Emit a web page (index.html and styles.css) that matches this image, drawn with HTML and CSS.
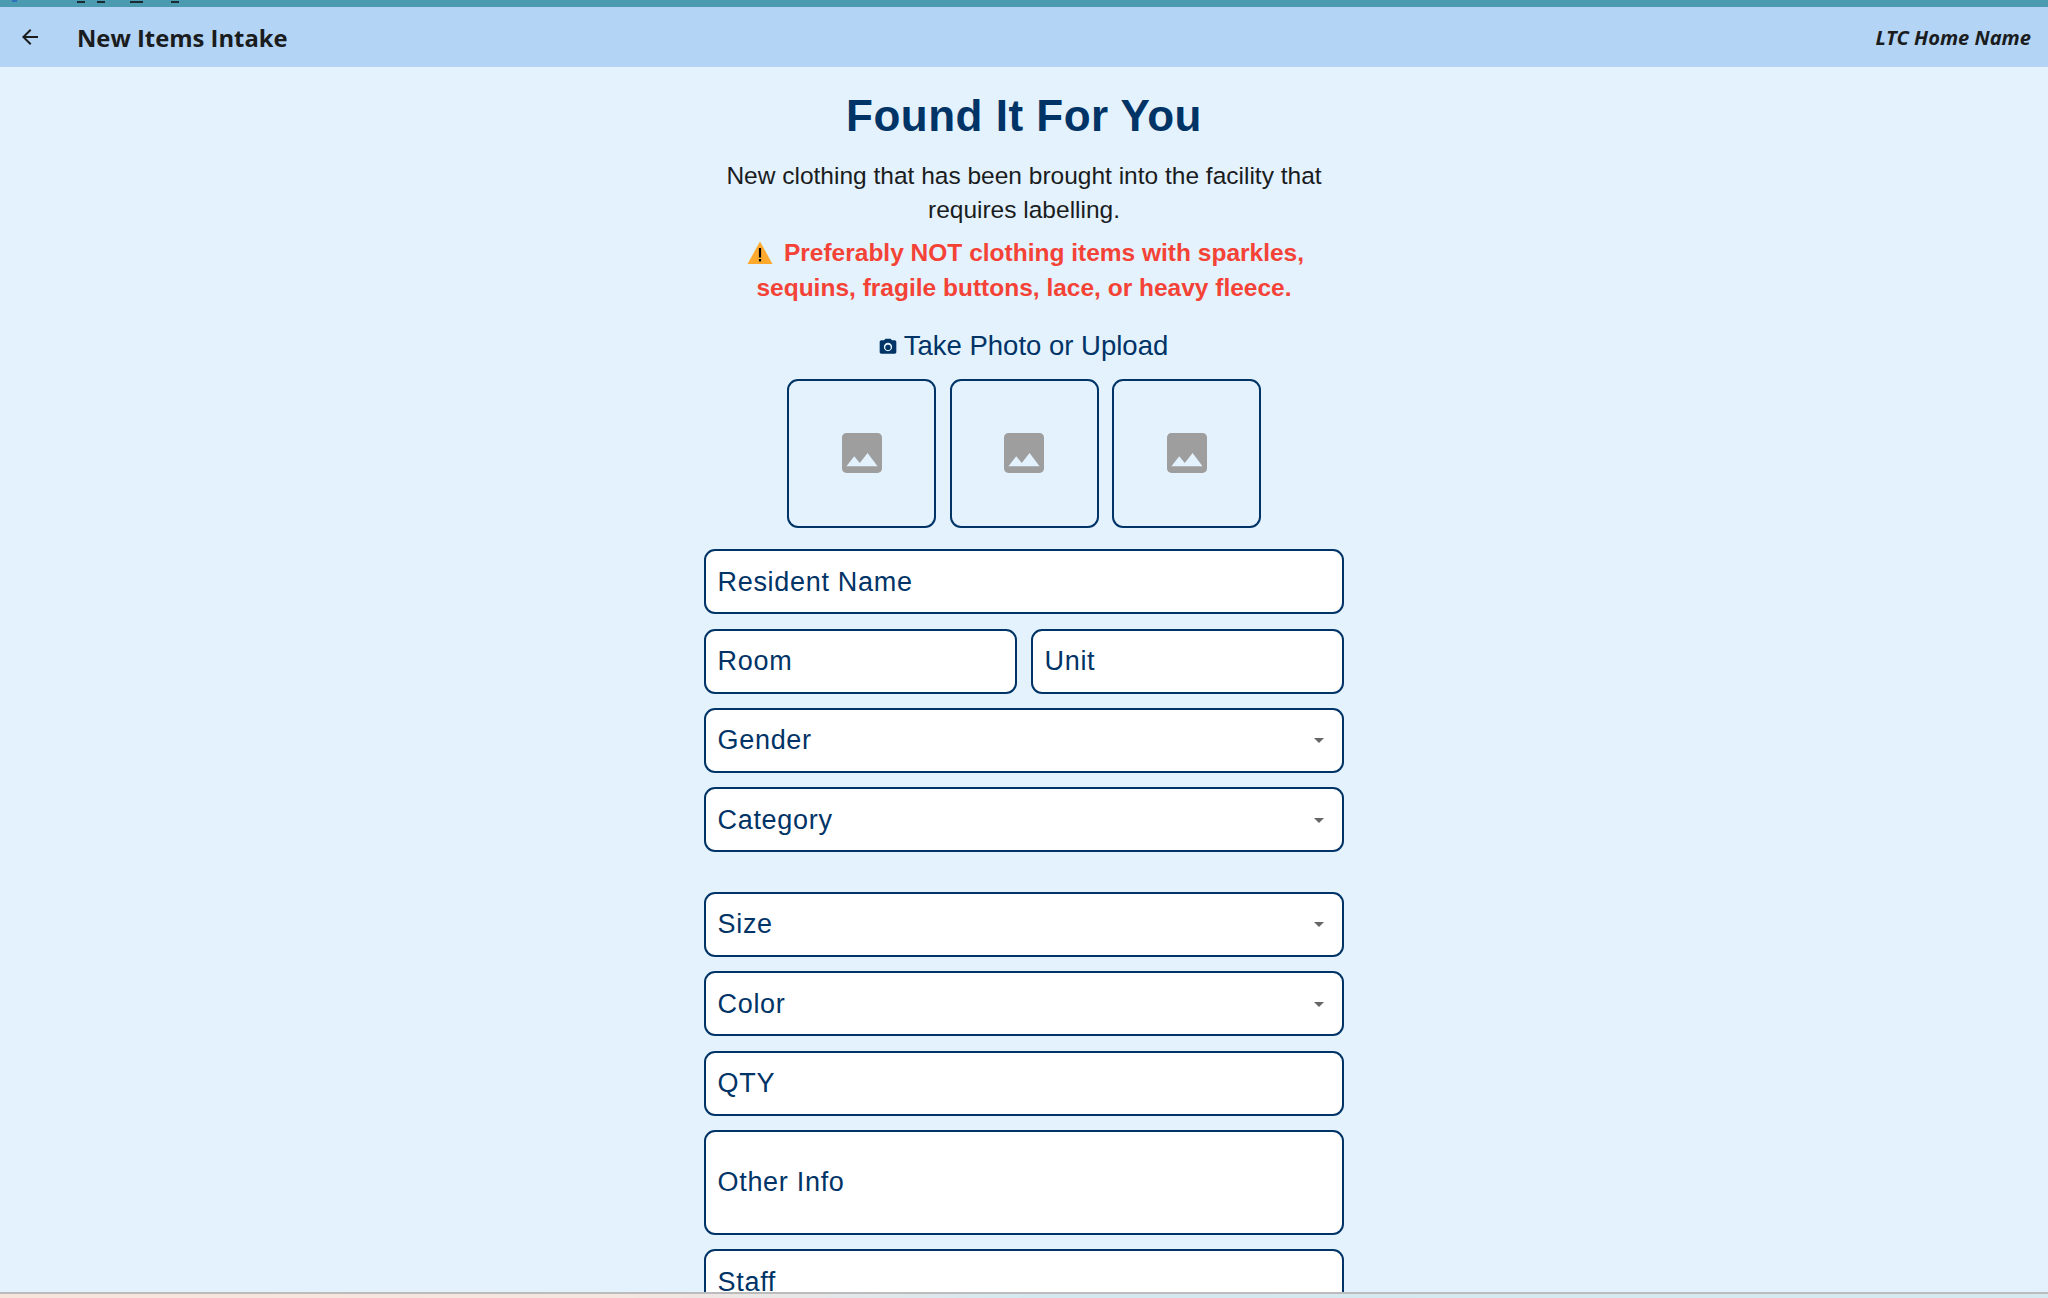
FILE: index.html
```html
<!DOCTYPE html>
<html lang="en">
<head>
<meta charset="utf-8">
<title>New Items Intake</title>
<link rel="stylesheet" href="styles.css">
</head>
<body>
<div class="titlebar">
  <i class="tick tick-blue"></i>
  <i class="tick tick-a"></i>
  <i class="tick tick-b"></i>
  <i class="tick tick-c"></i>
  <i class="tick tick-d"></i>
</div>
<header class="appbar">
  <svg class="back" viewBox="0 0 24 24"><path d="M20 11H7.83l5.59-5.59L12 4l-8 8 8 8 1.41-1.41L7.83 13H20v-2z"/></svg>
  <div class="appbar-title">New Items Intake</div>
  <div class="appbar-home">LTC Home Name</div>
</header>
<main class="main">
  <div class="column">
    <h1 class="heading">Found It For You</h1>
    <p class="intro">New clothing that has been brought into the facility that requires labelling.</p>
    <p class="warning"><svg class="warn-icon" viewBox="0 0 26 24"><path class="warn-tri" d="M13 0.5 L25.5 23 H0.5 Z"/><rect x="11.9" y="7" width="2.2" height="9.5"/><rect x="11.9" y="18" width="2.2" height="2.4"/></svg>Preferably NOT clothing items with sparkles, sequins, fragile buttons, lace, or heavy fleece.</p>
    <div class="photo-label"><svg class="cam" viewBox="0 0 24 24"><circle cx="12" cy="12.5" r="3.2"/><path d="M9 2L7.17 4H4c-1.1 0-2 .9-2 2v12c0 1.1.9 2 2 2h16c1.1 0 2-.9 2-2V6c0-1.1-.9-2-2-2h-3.17L15 2H9zm3 15c-2.76 0-5-2.24-5-5s2.24-5 5-5 5 2.24 5 5-2.24 5-5 5z"/></svg>Take Photo or Upload</div>
    <div class="photos">
      <div class="photo"><svg class="img" viewBox="3 3 18 18"><path d="M21 19V5c0-1.1-.9-2-2-2H5c-1.1 0-2 .9-2 2v14c0 1.1.9 2 2 2h14c1.1 0 2-.9 2-2zM8.5 13.5l2.5 3.01L14.5 12l4.5 6H5l3.5-4.5z"/></svg></div>
      <div class="photo"><svg class="img" viewBox="3 3 18 18"><path d="M21 19V5c0-1.1-.9-2-2-2H5c-1.1 0-2 .9-2 2v14c0 1.1.9 2 2 2h14c1.1 0 2-.9 2-2zM8.5 13.5l2.5 3.01L14.5 12l4.5 6H5l3.5-4.5z"/></svg></div>
      <div class="photo"><svg class="img" viewBox="3 3 18 18"><path d="M21 19V5c0-1.1-.9-2-2-2H5c-1.1 0-2 .9-2 2v14c0 1.1.9 2 2 2h14c1.1 0 2-.9 2-2zM8.5 13.5l2.5 3.01L14.5 12l4.5 6H5l3.5-4.5z"/></svg></div>
    </div>
    <div class="form">
      <div class="field">Resident Name</div>
      <div class="row">
        <div class="field">Room</div>
        <div class="field">Unit</div>
      </div>
      <div class="field field-select">Gender<i class="caret"></i></div>
      <div class="field field-select">Category<i class="caret"></i></div>
      <div class="field field-select group-start">Size<i class="caret"></i></div>
      <div class="field field-select">Color<i class="caret"></i></div>
      <div class="field">QTY</div>
      <div class="field field-tall">Other Info</div>
      <div class="field">Staff</div>
    </div>
  </div>
</main>
<div class="taskbar"></div>
</body>
</html>
```
FILE: styles.css
```css
* { box-sizing: border-box; }
html, body { height: 100%; margin: 0; }
body {
  display: flex;
  flex-direction: column;
  height: 1298px;
  overflow: hidden;
  background: #e3f2fd;
  font-family: "Liberation Sans", Arial, sans-serif;
}
.titlebar { position: relative; flex: 0 0 7px; background: #4a9bb0; }
.tick { position: absolute; top: 1px; height: 2px; background: #1c2b33; }
.tick-blue { top: 0; left: 12px; width: 5px; background: #2f6fc0; }
.tick-a { left: 77px; width: 8px; }
.tick-b { left: 97px; width: 8px; }
.tick-c { left: 130px; width: 13px; }
.tick-d { left: 171px; width: 8px; }

.appbar {
  flex: 0 0 60px;
  display: flex;
  align-items: center;
  padding: 0 17px 0 18px;
  background: #b3d4f4;
  color: #1a1c1e;
}
.back { width: 24px; height: 24px; fill: #1a1c1e; }
.appbar-title {
  margin-left: 35px;
  padding-top: 1px;
  font-family: "Open Sans", sans-serif;
  font-size: 23.8px;
  font-weight: 700;
}
.appbar-home {
  margin-left: auto;
  font-family: "Open Sans", sans-serif;
  font-size: 20.1px;
  font-weight: 700;
  font-style: italic;
}

.main { flex: 1 1 0; min-height: 0; overflow: hidden; }
.column {
  width: 640px;
  margin: 0 auto;
  display: flex;
  flex-direction: column;
  align-items: center;
  padding-top: 23.5px;
  text-align: center;
}
.heading {
  margin: 0;
  font-size: 44px;
  line-height: 50px;
  font-weight: 700;
  letter-spacing: 0.5px;
  color: #003366;
}
.intro {
  width: 610px;
  margin: 18.5px 0 0;
  font-size: 24.5px;
  line-height: 34px;
  color: #1a1c1e;
}
.warning {
  width: 600px;
  margin: 8.2px 0 0;
  font-size: 24.5px;
  line-height: 35px;
  font-weight: 700;
  color: #f44336;
}
.warn-icon { width: 26px; height: 24px; margin-left: 3px; margin-right: 11px; vertical-align: -4px; fill: #000; }
.warn-tri { fill: #ffa92e; }
.photo-label {
  margin-top: 24.6px;
  padding-right: 2px;
  font-size: 27.5px;
  line-height: 32px;
  color: #003366;
}
.cam { width: 20px; height: 20px; margin-right: 6px; fill: #003366; vertical-align: -2px; }
.photos { display: flex; gap: 13.5px; margin-top: 16.8px; }
.photo {
  width: 149px;
  height: 149px;
  display: flex;
  align-items: center;
  justify-content: center;
  border: 2px solid #003366;
  border-radius: 11px;
}
.img { width: 40px; height: 40px; fill: #9e9e9e; }

.form { width: 100%; margin-top: 21.6px; display: flex; flex-direction: column; gap: 14.4px; }
.row { display: flex; gap: 14px; }
.row .field { flex: 1 1 0; }
.field {
  position: relative;
  height: 65px;
  display: flex;
  align-items: center;
  padding: 1px 11.5px 0;
  background: #fff;
  border: 2px solid #003366;
  border-radius: 11px;
  font-size: 27px;
  letter-spacing: 0.7px;
  color: #003366;
  text-align: left;
}
.field-tall { height: 105px; }
.group-start { margin-top: 25px; }
.caret {
  margin-left: auto;
  margin-right: 7px;
  border-left: 5px solid transparent;
  border-right: 5px solid transparent;
  border-top: 5px solid #666;
}

.taskbar {
  flex: 0 0 6px;
  border-top: 2px solid #bcbcbc;
  background: linear-gradient(90deg, #f9e4dc 0%, #f5e6e0 30%, #d5e8f0 50%, #d6e9f1 100%);
}
```
